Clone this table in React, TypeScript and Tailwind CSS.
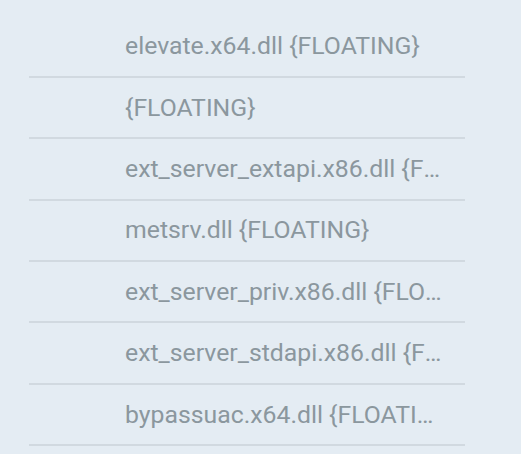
const modules = [
  "elevate.x64.dll {FLOATING}",
  "{FLOATING}",
  "ext_server_extapi.x86.dll {FLOATING}",
  "metsrv.dll {FLOATING}",
  "ext_server_priv.x86.dll {FLOATING}",
  "ext_server_stdapi.x86.dll {FLOATING}",
  "bypassuac.x64.dll {FLOATING}",
];

const ModuleRow = ({ label }: { label: string }) => {
  return (
    <li className="h-[61.4px] flex flex-col">
      <div className="flex-1 flex items-center pl-[96px] pr-[15px] min-w-0">
        <span className="truncate text-[24.8px] leading-[1.2] text-[#8b979e]">{label}</span>
      </div>
      <div className="h-[2px] bg-[#d1d9e0]" />
    </li>
  );
};

const App = () => {
  return (
    <div
      className="w-[521px] h-[454px] overflow-hidden bg-[#e4ecf3] pt-[16.5px]"
      style={{ fontFamily: "Roboto, 'Liberation Sans', sans-serif" }}
    >
      <ul className="ml-[29px] w-[436px] flex flex-col">
        {modules.map((m, i) => (
          <ModuleRow label={m} key={i} />
        ))}
      </ul>
    </div>
  );
};

export default App;
